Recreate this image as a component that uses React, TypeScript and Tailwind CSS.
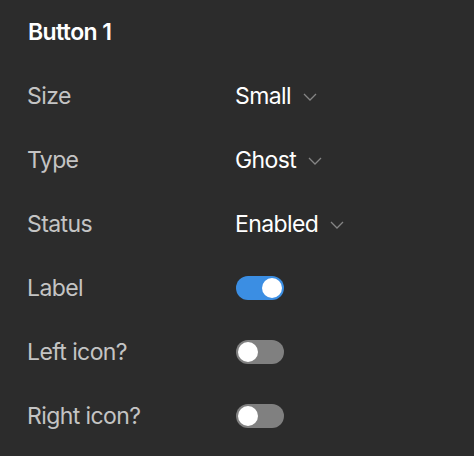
import React from "react";

type Row =
  | { label: string; kind: "select"; value: string }
  | { label: string; kind: "toggle"; on: boolean };

const rows: Row[] = [
  { label: "Size", kind: "select", value: "Small" },
  { label: "Type", kind: "select", value: "Ghost" },
  { label: "Status", kind: "select", value: "Enabled" },
  { label: "Label", kind: "toggle", on: true },
  { label: "Left icon?", kind: "toggle", on: false },
  { label: "Right icon?", kind: "toggle", on: false },
];

function Chevron() {
  return (
    <svg width="14" height="8" viewBox="0 0 14 8" fill="none" className="ml-[12px] mt-[1px]">
      <path d="M1 1 L7 7 L13 1" stroke="#858585" strokeWidth="1.3" />
    </svg>
  );
}

function Toggle({ on }: { on: boolean }) {
  return (
    <div
      className={`ml-[1px] flex h-6 w-12 items-center rounded-full px-[2px] ${
        on ? "justify-end bg-[#3b8ee3]" : "justify-start bg-[#808080]"
      }`}
    >
      <span className="h-5 w-5 rounded-full bg-white" />
    </div>
  );
}

export default function App() {
  return (
    <div
      className="h-[456px] w-[474px] bg-[#2c2c2c] pl-[27px] tracking-[-0.6px]"
      style={{ fontFamily: "Inter, 'Noto Sans', sans-serif" }}
    >
      <div className="flex h-16 items-center pl-[1px] text-[23px] font-semibold text-white">
        Button 1
      </div>
      {rows.map((row) => (
        <div key={row.label} className="flex h-16 items-center">
          <span className="w-[208px] text-[23px] text-[#c4c4c4]">{row.label}</span>
          {row.kind === "select" ? (
            <div className="flex items-center text-[23px] text-white">
              {row.value}
              <Chevron />
            </div>
          ) : (
            <Toggle on={row.on} />
          )}
        </div>
      ))}
    </div>
  );
}
